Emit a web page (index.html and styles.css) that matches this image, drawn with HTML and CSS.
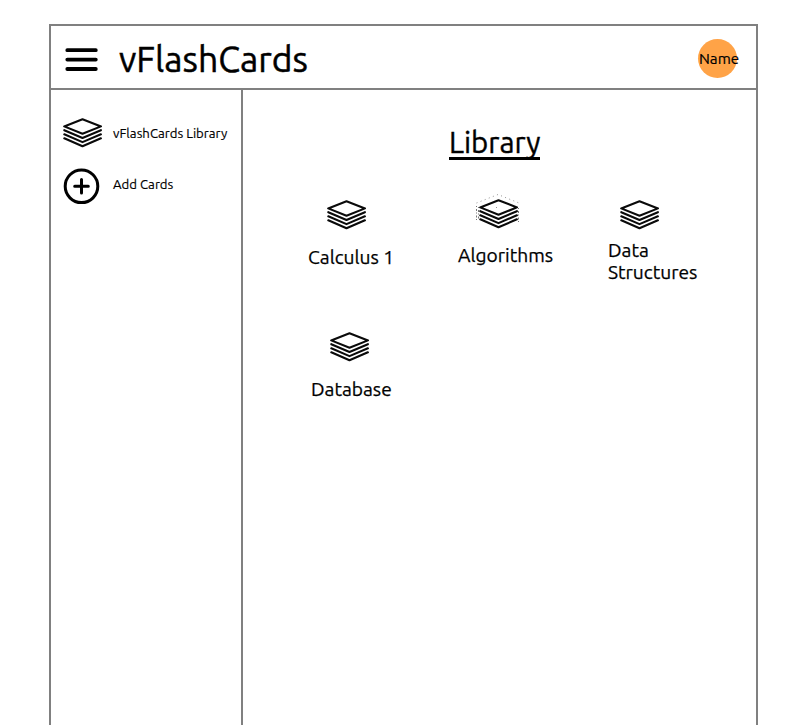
FILE: index.html
```html
<!DOCTYPE html>
<html lang="en">
<head>
<meta charset="utf-8">
<title>vFlashCards</title>
<link rel="stylesheet" href="styles.css">
</head>
<body>
<svg class="defs" width="0" height="0">
  <symbol id="stack" viewBox="0 0 40 30">
    <g fill="none" stroke="#0a0a0a" stroke-width="2.1" stroke-linejoin="round" stroke-linecap="round">
      <path d="M19.5 1.2 38 8.4 19.5 15.8 1.2 8.4Z"/>
      <path d="M1.3 12.2 19.5 20 37.9 12.2M1.3 16.3 19.5 24.1 37.9 16.3M1.3 20.3 19.5 28.3 37.9 20.3"/>
    </g>
  </symbol>
</svg>
<div class="frame">
  <header class="header">
    <svg class="menu" width="34" height="26" viewBox="0 0 34 26"><path d="M2.3 3.2H30.8M2.3 12.6H30.8M2.3 22H30.8" stroke="#000" stroke-width="3.8" stroke-linecap="round"/></svg>
    <h1 class="brand">vFlashCards</h1>
    <div class="avatar"><span>Name</span></div>
  </header>
  <div class="body">
    <nav class="sidebar">
      <a class="link"><svg width="40" height="30"><use href="#stack"/></svg><span>vFlashCards Library</span></a>
      <a class="link second"><svg width="40" height="38" viewBox="0 0 40 38"><g fill="none" stroke="#000" stroke-width="3" stroke-linecap="round"><circle cx="18.5" cy="19.3" r="16.3"/><path d="M11.7 19.3H25.3M18.5 12.5V26.1"/></g></svg><span>Add Cards</span></a>
    </nav>
    <main class="main">
      <h2 class="title">Library</h2>
      <div class="grid">
        <div class="card calculus"><svg width="40" height="30"><use href="#stack"/></svg><p>Calculus 1</p></div>
        <div class="card algorithms"><svg width="40" height="30"><use href="#stack"/><path class="ghost" d="M-2.5 4 19 -4.5 40 4M17 8.5h2"/><path class="ghost side" d="M-2.5 7V21M-.5 8V21M39.5 9V25"/></svg><p>Algorithms</p></div>
        <div class="card structures"><svg width="40" height="30"><use href="#stack"/></svg><p>Data Structures</p></div>
        <div class="card database"><svg width="40" height="30"><use href="#stack"/></svg><p>Database</p></div>
      </div>
    </main>
  </div>
</div>
</body>
</html>
```
FILE: styles.css
```css
* { box-sizing: border-box; }
html, body { margin: 0; height: 725px; overflow: hidden; }
body { background: #fff; color: #000; font-family: "Ubuntu", "Noto Sans", sans-serif; padding: 24px 0 0 49px; }
.defs { display: none; }
svg { display: block; flex: none; }
h1, h2, p { margin: 0; font-weight: 400; }
.frame { width: 709px; height: 701px; border: 2px solid #808080; border-bottom: 0; display: flex; flex-direction: column; }
.header { height: 64px; border-bottom: 2px solid #808080; display: flex; align-items: center; padding: 0 19px 0 14px; }
.menu { margin-top: 5px; }
.brand { margin: 4px 0 0 20px; font-size: 35.5px; line-height: 44px; -webkit-text-stroke: 0.5px #000; white-space: nowrap; }
.avatar { width: 39px; height: 39px; margin: 3px 0 0 auto; border-radius: 50%; background: #ffa347; display: flex; align-items: center; padding-left: 1px; font-size: 15.2px; -webkit-text-stroke: 0.2px #000; white-space: nowrap; }
.body { flex: 1; display: flex; -webkit-text-stroke: 0.25px #000; }
.sidebar { flex: none; width: 192px; border-right: 2px solid #808080; padding: 28px 0 0 12px; }
.link { display: flex; align-items: center; height: 30px; font-size: 13.2px; -webkit-text-stroke: 0.15px #000; white-space: nowrap; }
.link span { margin-left: 10px; line-height: 18px; }
.second { height: 38px; margin-top: 19px; }
.second span { margin-top: -4px; }
.main { flex: 1; min-width: 0; }
.title { width: 91px; height: 35px; margin: 35px 0 0 206px; border-bottom: 3px solid #000; font-size: 29.4px; line-height: 35px; -webkit-text-stroke: 0.4px #000; white-space: nowrap; }
.grid { display: grid; grid-template-columns: 150px 150px 150px; grid-template-rows: 132px 100px; margin: 40px 0 0 65px; }
.card { font-size: 19.2px; line-height: 22px; }
.card svg { overflow: visible; margin-left: 19px; }
.card p { margin-top: 16px; white-space: nowrap; }
.card.algorithms svg { margin: -1px 0 0 21px; }
.card.algorithms p { margin-top: 15px; }
.card.structures svg { margin-left: 12px; }
.card.structures p { width: 95px; margin-top: 9px; white-space: normal; }
.database { padding-left: 3px; }
.ghost { fill: none; stroke: #888; stroke-width: 0.9; stroke-dasharray: 1 3.4; }
.side { stroke: #666; stroke-dasharray: 1 2 2 1.5; }
```
